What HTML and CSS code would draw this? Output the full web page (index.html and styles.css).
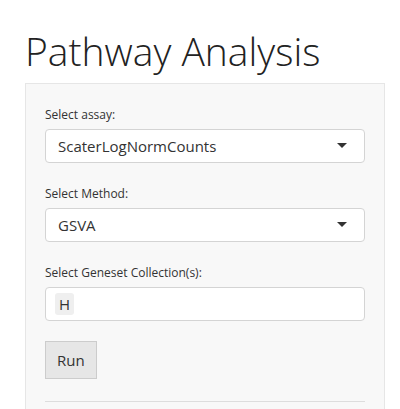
FILE: index.html
```html
<!DOCTYPE html>
<html>
<head>
<meta charset="utf-8">
<link rel="stylesheet" href="styles.css">
</head>
<body>
<div class="page">
  <h1 class="title">Pathway Analysis</h1>
  <div class="well">
    <div class="group">
      <label class="label">Select assay:</label>
      <div class="select">
        <span class="value">ScaterLogNormCounts</span>
        <span class="caret"></span>
      </div>
    </div>
    <div class="group">
      <label class="label">Select Method:</label>
      <div class="select">
        <span class="value">GSVA</span>
        <span class="caret"></span>
      </div>
    </div>
    <div class="group group-last">
      <label class="label">Select Geneset Collection(s):</label>
      <div class="multi">
        <span class="item">H</span>
      </div>
    </div>
    <button class="btn">Run</button>
    <hr class="rule">
  </div>
</div>
</body>
</html>
```

FILE: styles.css
```css
html, body {
  margin: 0;
  padding: 0;
  background: #ffffff;
}
body {
  font-family: "Open Sans", "Liberation Sans", sans-serif;
  color: #333333;
  font-size: 15px;
}
.page {
  padding: 0 15px 0 25px;
}
.title {
  font-family: "Open Sans", sans-serif;
  font-weight: 300;
  font-size: 39px;
  line-height: 1.1;
  margin: 30px 0 10px 0;
  color: #222222;
}
.well {
  background: #f8f8f8;
  border: 1px solid #e6e6e6;
  padding: 22px 19px 20px 19px;
  box-sizing: content-box;
  width: 320px;
}
.group {
  margin-bottom: 22px;
}
.group-last {
  margin-bottom: 20px;
}
.label {
  display: block;
  font-size: 12px;
  line-height: 17px;
  margin-bottom: 6px;
  color: #333333;
}
.select, .multi {
  height: 34px;
  box-sizing: border-box;
  background: #ffffff;
  border: 1px solid #d4d4d4;
  border-radius: 4px;
  display: flex;
  align-items: center;
}
.select {
  padding: 0 17px 0 12px;
  justify-content: space-between;
}
.value {
  font-size: 15px;
  line-height: 20px;
  color: #333333;
}
.caret {
  width: 0;
  height: 0;
  border-left: 5px solid transparent;
  border-right: 5px solid transparent;
  border-top: 5px solid #333333;
}
.multi {
  padding: 0 9px;
}
.item {
  background: #efefef;
  border-radius: 3px;
  font-size: 15px;
  line-height: 22px;
  padding: 0 4px;
  color: #333333;
}
.btn {
  display: block;
  font-family: "Open Sans", sans-serif;
  font-size: 15px;
  line-height: 20px;
  color: #333333;
  background: #e6e6e6;
  border: 1px solid #cccccc;
  border-radius: 0;
  padding: 8px 11px;
  height: 38px;
  margin: 0;
}
.rule {
  border: 0;
  border-top: 1px solid #dddddd;
  margin: 22px 0 0 0;
}
```
